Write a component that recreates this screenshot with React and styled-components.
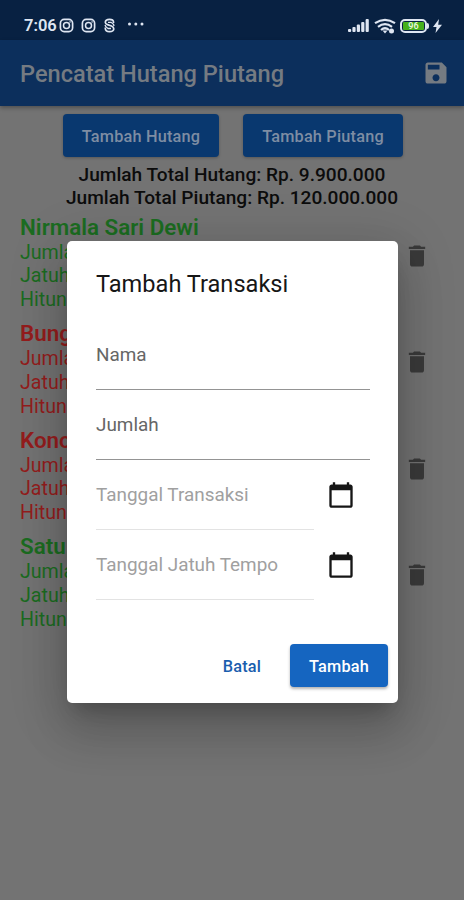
import React from 'react';
import styled, { createGlobalStyle } from 'styled-components';

const GlobalStyle = createGlobalStyle`
  * {
    box-sizing: border-box;
  }
  body {
    margin: 0;
    font-family: Roboto, sans-serif;
    overflow: hidden;
  }
`;

// colours behind the dialog are already dimmed
const Screen = styled.div`
  position: relative;
  width: 464px;
  height: 900px;
  overflow: hidden;
  background: #737373;
`;

const StatusArea = styled.div`
  height: 40px;
  background: #082142;
`;

const AppBar = styled.header`
  display: flex;
  align-items: center;
  justify-content: space-between;
  height: 66px;
  padding: 0 14px 0 20px;
  color: #757b82;
  background: #0c2f5c;
  box-shadow: 0 2px 4px rgba(0, 0, 0, 0.3);
`;

const AppTitle = styled.h1`
  margin: 2px 0 0;
  font-size: 23.6px;
  font-weight: 500;
`;

const Button = styled.button`
  width: ${({ $width }) => $width}px;
  height: 43px;
  padding: 1px 0 0;
  border: 0;
  border-radius: 4px;
  font-family: inherit;
  font-size: 16.3px;
  font-weight: 500;
  letter-spacing: 0.2px;
  color: #fff;
  background: #1565c0;
  box-shadow: 0 2px 3px rgba(0, 0, 0, 0.3);
`;

const DimmedButton = styled(Button)`
  color: #7e8da3;
  background: #09386f;
  box-shadow: 0 1px 3px rgba(0, 0, 0, 0.25);
`;

const TextButton = styled(Button)`
  color: #1a5eae;
  background: transparent;
  box-shadow: none;
`;

const Actions = styled.div`
  display: flex;
  gap: 24px;
  padding: 8px 0 0 63px;
`;

const Totals = styled.div`
  padding-top: 6px;
  font-size: 19.1px;
  font-weight: 500;
  line-height: 23.4px;
  text-align: center;
  color: #0c0c0c;
`;

const Row = styled.div`
  display: flex;
  justify-content: space-between;
  height: 106.5px;
  padding: 4px 33px 0 20px;
  font-size: 19.6px;
  line-height: 23.6px;
  color: ${({ $color }) => $color};

  svg {
    margin-top: 28px;
    color: #3a3a3a;
  }
`;

const Name = styled.div`
  margin-bottom: 1px;
  font-size: 22.4px;
  font-weight: 600;
  line-height: 26px;
`;

const Overlay = styled.div`
  position: absolute;
  inset: 0;
  padding: 241px 66px 0 67px;
`;

const Dialog = styled.div`
  display: flex;
  flex-direction: column;
  height: 462px;
  padding: 29px 10px 16px 29px;
  border-radius: 5px;
  background: #fff;
  box-shadow: 0 13px 18px -8px rgba(0, 0, 0, 0.2), 0 28px 45px 4px rgba(0, 0, 0, 0.14),
    0 10px 54px 9px rgba(0, 0, 0, 0.12);
`;

const DialogTitle = styled.h2`
  margin: 0 0 21px;
  font-size: 23.6px;
  font-weight: 400;
  line-height: 29px;
  color: #161616;
`;

const FieldRow = styled.div`
  display: flex;
  height: 70px;
  padding-right: 18px;

  svg {
    margin: 21px 0 0 13px;
    color: #161616;
  }
`;

const Field = styled.div`
  flex: ${({ $disabled }) => ($disabled ? '0 0 218px' : 1)};
  padding-top: 23px;
  font-size: 18.9px;
  line-height: 24px;
  color: ${({ $disabled }) => ($disabled ? '#a0a0a0' : '#666')};
  border-bottom: 1px solid ${({ $disabled }) => ($disabled ? '#e3e3e3' : '#949494')};
`;

const DialogActions = styled.div`
  display: flex;
  justify-content: flex-end;
  gap: 9px;
  margin-top: auto;
`;

const StatusBar = styled.div`
  position: absolute;
  top: 14px;
  left: 24px;
  right: 22px;
  display: flex;
  align-items: center;
  height: 23px;
  color: #dfe6f2;
`;

const Clock = styled.span`
  width: 35px;
  font-size: 16.5px;
  font-weight: 600;
`;

const Notifications = styled.div`
  display: flex;
  align-items: center;
  gap: 7px;
  flex: 1;
`;

const Indicators = styled.div`
  display: flex;
  align-items: center;
  gap: 4px;
`;

const Battery = styled.span`
  display: flex;
  align-items: center;
`;

const BatteryBody = styled.span`
  width: 27px;
  height: 14px;
  padding: 1px;
  border: 2px solid #dfe6f2;
  border-radius: 5px;
`;

const BatteryLevel = styled.span`
  display: block;
  height: 8px;
  border-radius: 1px;
  font-size: 9px;
  font-weight: 600;
  line-height: 9px;
  text-align: center;
  color: #e8f5dc;
  background: #45b01c;
`;

const BatteryTip = styled.span`
  width: 2px;
  height: 6px;
  border-radius: 0 2px 2px 0;
  background: #dfe6f2;
`;

const Icon = ({ d }) => (
  <svg width="28" height="28" viewBox="0 0 24 24" fill="currentColor">
    <path d={d} />
  </svg>
);

const SAVE =
  'M17 3H5c-1.11 0-2 .9-2 2v14c0 1.1.89 2 2 2h14c1.1 0 2-.9 2-2V7l-4-4zm-5 16c-1.66 0-3-1.34-3-3s1.34-3 3-3 3 1.34 3 3-1.34 3-3 3zm3-10H5V5h10v4z';
const TRASH = 'M6 19c0 1.1.9 2 2 2h8c1.1 0 2-.9 2-2V7H6v12zM19 4h-3.5l-1-1h-5l-1 1H5v2h14V4z';
const CALENDAR =
  'M20 3h-1V1h-2v2H7V1H5v2H4c-1.1 0-2 .9-2 2v16c0 1.1.9 2 2 2h16c1.1 0 2-.9 2-2V5c0-1.1-.9-2-2-2zm0 18H4V8h16v13z';

const InstagramIcon = () => (
  <svg width="15" height="15" viewBox="0 0 16 16" fill="none" stroke="currentColor">
    <rect x="1.5" y="1.5" width="13" height="13" rx="4" strokeWidth="1.8" />
    <circle cx="8" cy="8" r="3.2" strokeWidth="1.6" />
    <circle cx="11.8" cy="4.2" r="0.4" />
  </svg>
);

const SnackIcon = () => (
  <svg width="13" height="15" viewBox="0 0 13 15" fill="none" stroke="currentColor">
    <path
      d="M10.5 5V4Q10.500 1.300 6.500 1.300T2.300 4.200Q2.300 6 4.500 6.600L8.500 8Q10.800 9 10.800 11 10.500 13.700 6.500 13.700T2.300 10.500V9.500"
      strokeWidth="1.700"
    />
    <path d="M5 4.300L8 4.300Q11 6 11 8M2 7Q2.500 9 5 10.500H8" strokeWidth="1.300" />
  </svg>
);

const MoreIcon = styled(({ className }) => (
  <svg className={className} width="18" height="6" viewBox="0 0 18 6" fill="currentColor">
    <circle cx="2.5" cy="3" r="1.5" />
    <circle cx="8.8" cy="3" r="1.5" />
    <circle cx="15" cy="3" r="1.5" />
  </svg>
))`
  margin: -3px 0 0 4px;
`;

const SignalIcon = () => (
  <svg width="22" height="15" viewBox="0 0 22 15" fill="currentColor">
    <rect x="0" y="11" width="3.2" height="3" rx="1" />
    <rect x="4.400" y="9" width="3.200" height="5" rx="1" />
    <rect x="8.800" y="6.500" width="3.200" height="7.500" rx="1" />
    <rect x="13.200" y="4" width="3.200" height="10" rx="1" />
    <rect x="17.600" y="1" width="3.200" height="13" rx="1" />
  </svg>
);

const WifiIcon = () => (
  <svg width="22" height="16" viewBox="0 0 22 16" fill="none" stroke="currentColor" strokeWidth="2.2">
    <path d="M1 5.2Q11-1.500 21 5.200M4 8.800Q11 3.500 18 8.800M7 12Q11 8.500 15 12" />
    <path d="M8.500 12.500h5L11 15.500z" fill="currentColor" stroke="none" />
    <circle cx="17.500" cy="13" r="2.500" fill="currentColor" stroke="none" />
  </svg>
);

const BoltIcon = () => (
  <svg width="9" height="14" viewBox="0 0 9 14" fill="currentColor">
    <path d="M6 0L0 8h3.500L2.500 14 9 5.800H5.200z" />
  </svg>
);

const GREEN = '#1b6c21';
const RED = '#941d1d';

const transactions = [
  { name: 'Nirmala Sari Dewi', color: GREEN },
  { name: 'Bunga', color: RED },
  { name: 'Konoha', color: RED },
  { name: 'Satu', color: GREEN },
];

const fields = [
  { label: 'Nama' },
  { label: 'Jumlah' },
  { label: 'Tanggal Transaksi', date: true },
  { label: 'Tanggal Jatuh Tempo', date: true },
];

const App = () => (
  <Screen>
    <GlobalStyle />
    <StatusArea />
    <AppBar>
      <AppTitle>Pencatat Hutang Piutang</AppTitle>
      <Icon d={SAVE} />
    </AppBar>
    <Actions>
      <DimmedButton $width={156}>Tambah Hutang</DimmedButton>
      <DimmedButton $width={160}>Tambah Piutang</DimmedButton>
    </Actions>
    <Totals>
      <div>Jumlah Total Hutang: Rp. 9.900.000</div>
      <div>Jumlah Total Piutang: Rp. 120.000.000</div>
    </Totals>
    {transactions.map(({ name, color }) => (
      <Row key={name} $color={color}>
        <div>
          <Name>{name}</Name>
          <div>Jumlah</div>
          <div>Jatuh</div>
          <div>Hitung</div>
        </div>
        <Icon d={TRASH} />
      </Row>
    ))}
    <Overlay>
      <Dialog>
        <DialogTitle>Tambah Transaksi</DialogTitle>
        {fields.map(({ label, date }) => (
          <FieldRow key={label}>
            <Field $disabled={date}>{label}</Field>
            {date && <Icon d={CALENDAR} />}
          </FieldRow>
        ))}
        <DialogActions>
          <TextButton $width={78}>Batal</TextButton>
          <Button $width={98}>Tambah</Button>
        </DialogActions>
      </Dialog>
    </Overlay>
    <StatusBar>
      <Clock>7:06</Clock>
      <Notifications>
        <InstagramIcon />
        <InstagramIcon />
        <SnackIcon />
        <MoreIcon />
      </Notifications>
      <Indicators>
        <SignalIcon />
        <WifiIcon />
        <Battery>
          <BatteryBody>
            <BatteryLevel>96</BatteryLevel>
          </BatteryBody>
          <BatteryTip />
        </Battery>
        <BoltIcon />
      </Indicators>
    </StatusBar>
  </Screen>
);

export default App;
